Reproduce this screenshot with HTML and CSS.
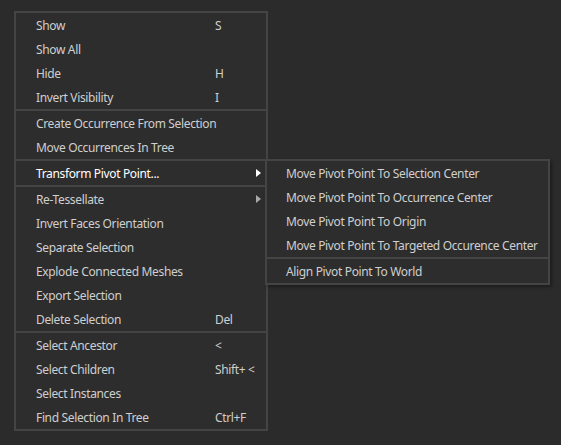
FILE: index.html
```html
<!DOCTYPE html>
<html>
<head>
<meta charset="utf-8">
<link rel="stylesheet" href="styles.css">
</head>
<body>
<div class="stage">
  <div class="menu main">
    <div class="item"><span class="label">Show</span><span class="key">S</span></div>
    <div class="item"><span class="label">Show All</span><span class="key"></span></div>
    <div class="item"><span class="label">Hide</span><span class="key">H</span></div>
    <div class="item"><span class="label">Invert Visibility</span><span class="key">I</span></div>
    <div class="sep"></div>
    <div class="item"><span class="label">Create Occurrence From Selection</span></div>
    <div class="item"><span class="label">Move Occurrences In Tree</span></div>
    <div class="sep"></div>
    <div class="item active"><span class="label">Transform Pivot Point...</span><span class="arrow"></span></div>
    <div class="sep"></div>
    <div class="item"><span class="label">Re-Tessellate</span><span class="arrow"></span></div>
    <div class="item"><span class="label">Invert Faces Orientation</span></div>
    <div class="item"><span class="label">Separate Selection</span></div>
    <div class="item"><span class="label">Explode Connected Meshes</span></div>
    <div class="item"><span class="label">Export Selection</span></div>
    <div class="item"><span class="label">Delete Selection</span><span class="key">Del</span></div>
    <div class="sep"></div>
    <div class="item"><span class="label">Select Ancestor</span><span class="key">&lt;</span></div>
    <div class="item"><span class="label">Select Children</span><span class="key">Shift+ &lt;</span></div>
    <div class="item"><span class="label">Select Instances</span></div>
    <div class="item"><span class="label">Find Selection In Tree</span><span class="key">Ctrl+F</span></div>
  </div>
  <div class="menu sub">
    <div class="item"><span class="label">Move Pivot Point To Selection Center</span></div>
    <div class="item"><span class="label">Move Pivot Point To Occurrence Center</span></div>
    <div class="item"><span class="label">Move Pivot Point To Origin</span></div>
    <div class="item"><span class="label">Move Pivot Point To Targeted Occurence Center</span></div>
    <div class="sep"></div>
    <div class="item"><span class="label">Align Pivot Point To World</span></div>
  </div>
</div>
</body>
</html>
```
FILE: styles.css
```css
html, body {
  margin: 0;
  padding: 0;
  background: #2b2b2b;
  width: 561px;
  height: 445px;
  overflow: hidden;
}
.stage {
  position: relative;
  padding: 11px 0 0 14px;
  font-family: "Segoe UI", "Noto Sans", "Open Sans", sans-serif;
  font-size: 12px;
  letter-spacing: -0.35px;
  color: #cfcfcf;
}
.menu {
  background: #2d2d2d;
  border: 2px solid #444444;
  display: flex;
  flex-direction: column;
}
.main {
  width: 250px;
}
.sub {
  position: absolute;
  left: 265px;
  top: 159px;
  width: 281px;
  box-shadow: 2px 2px 3px rgba(0,0,0,0.35);
}
.item {
  height: 24px;
  display: flex;
  align-items: center;
  padding-left: 20px;
  position: relative;
  white-space: nowrap;
}
.main .label {
  width: 179px;
}
.key {
  flex: none;
}
.active {
  color: #ffffff;
}
.sep {
  height: 2px;
  background: #444444;
}
.arrow {
  position: absolute;
  left: 240px;
  top: 8px;
  width: 0;
  height: 0;
  border-top: 4.5px solid transparent;
  border-bottom: 4.5px solid transparent;
  border-left: 5px solid #a8a8a8;
}
.active .arrow {
  border-left-color: #ffffff;
}
.sub .item {
  padding-left: 19px;
}
```
